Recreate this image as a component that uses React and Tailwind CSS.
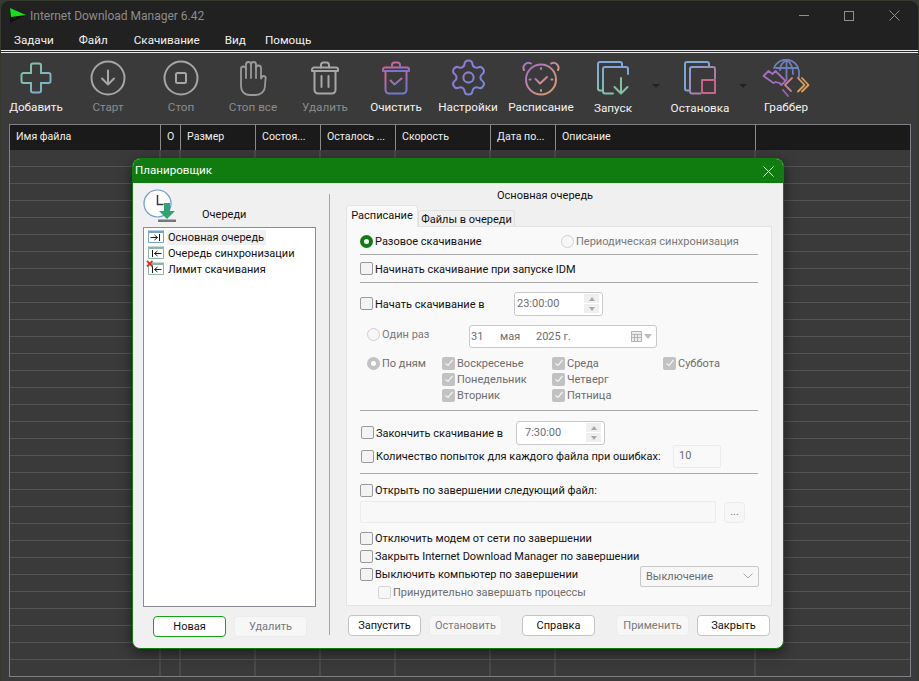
import React from "react";
import { Settings } from "lucide-react";

const tools = [
  { label: "Добавить", w: "w-[72px]", on: true, icon: <PlusIcon /> },
  { label: "Старт", w: "w-[72px]", icon: <StartIcon /> },
  { label: "Стоп", w: "w-[72px] ml-px", icon: <StopIcon /> },
  { label: "Стоп все", w: "w-[72px]", icon: <HandIcon /> },
  { label: "Удалить", w: "w-[72px]", icon: <TrashIcon /> },
  { label: "Очистить", w: "w-[72px] -ml-px", on: true, icon: <ClearIcon /> },
  { label: "Настройки", w: "w-[72px]", on: true, icon: <Settings size={41} strokeWidth={1.2} color="url(#gGear)" /> },
  { label: "Расписание", w: "w-[72px] ml-px", on: true, icon: <AlarmIcon /> },
  { label: "Запуск", w: "w-[72px]", on: true, low: true, icon: <RunIcon /> },
  { arrow: true, w: "w-[14px]" },
  { label: "Остановка", w: "w-[72px] ml-px", on: true, low: true, icon: <HaltIcon /> },
  { arrow: true, w: "w-[14px]" },
  { label: "Граббер", w: "w-[72px]", on: true, icon: <GrabberIcon /> },
];

const cols = [
  ["Имя файла", "w-[151px]"],
  ["О", "w-[20px]"],
  ["Размер", "w-[75px]"],
  ["Состоя...", "w-[65px]"],
  ["Осталось ...", "w-[75px]"],
  ["Скорость", "w-[95px]"],
  ["Дата по...", "w-[65px]"],
  ["Описание", "w-[200px]"],
];

function PlusIcon() {
  return (
    <svg width="32" height="32" viewBox="0 0 32 32" fill="none" stroke="url(#gPlus)" strokeWidth="2">
      <path d="M13 1.5h6a2 2 0 0 1 2 2V11h7.5a2 2 0 0 1 2 2v6a2 2 0 0 1-2 2H21v7.5a2 2 0 0 1-2 2h-6a2 2 0 0 1-2-2V21H3.5a2 2 0 0 1-2-2v-6a2 2 0 0 1 2-2H11V3.5a2 2 0 0 1 2-2z" />
    </svg>
  );
}
function StartIcon() {
  return (
    <svg width="36" height="36" viewBox="0 0 36 36" fill="none" stroke="#a6a6a6" strokeWidth="2" strokeLinecap="round" strokeLinejoin="round">
      <circle cx="18" cy="18" r="16.5" />
      <path d="M18 10.5v14M12 18.5l6 6 6-6" />
    </svg>
  );
}
function StopIcon() {
  return (
    <svg width="36" height="36" viewBox="0 0 36 36" fill="none" stroke="#a6a6a6" strokeWidth="2">
      <circle cx="18" cy="18" r="16.5" />
      <rect x="13" y="13" width="10" height="10" rx="1.5" />
    </svg>
  );
}
function HandIcon() {
  return (
    <svg width="30" height="36" viewBox="0 0 30 36" fill="none" stroke="#9a9a9a" strokeWidth="1.800" strokeLinecap="round" strokeLinejoin="round">
      <path d="M3 24V9a2.500 2.500 0 0 1 5 0V4.500a2.500 2.500 0 0 1 5 0 2.500 2.500 0 0 1 5 0V8a2.500 2.500 0 0 1 5 0v10.500l1.500-2a2 2 0 0 1 3 2.500c0 2-.5 4-.5 7 0 5-4 9-9 9h-6c-6 0-9-4-9-9z" />
      <path d="M8 9v9M13 4.500V18M18 4.500V18" />
    </svg>
  );
}
function TrashIcon() {
  return (
    <svg width="30" height="34" viewBox="0 0 30 34" fill="none" stroke="#a6a6a6" strokeWidth="2" strokeLinecap="round" strokeLinejoin="round">
      <path d="M2 10V8.500a2 2 0 0 1 2-2h22a2 2 0 0 1 2 2V10H2z" />
      <path d="M11 6.500V4a2.500 2.500 0 0 1 2.500-2.500h3A2.500 2.500 0 0 1 19 4v2.500" />
      <path d="M4.500 10.500V29a3.500 3.500 0 0 0 3.500 3.500h14a3.500 3.500 0 0 0 3.500-3.500V10.500" />
      <path d="M11.500 15v11M18.500 15v11" />
    </svg>
  );
}
function ClearIcon() {
  return (
    <svg width="30" height="34" viewBox="0 0 30 34" fill="none" stroke="url(#gClear)" strokeWidth="2" strokeLinecap="round" strokeLinejoin="round">
      <path d="M2 10V8.500a2 2 0 0 1 2-2h22a2 2 0 0 1 2 2V10H2z" />
      <path d="M11 6.500V4a2.500 2.500 0 0 1 2.500-2.500h3A2.500 2.500 0 0 1 19 4v2.500" />
      <path d="M4.500 10.500V29a3.500 3.500 0 0 0 3.500 3.500h14a3.500 3.500 0 0 0 3.500-3.500V10.500" />
      <path d="M9.500 19.500l4 4 7-6" />
    </svg>
  );
}
function AlarmIcon() {
  return (
    <svg width="38" height="36" viewBox="0 0 38 36" fill="none" stroke="url(#gAlarm)" strokeWidth="2" strokeLinecap="round" strokeLinejoin="round">
      <circle cx="19" cy="19.5" r="15" />
      <path d="M2 10a5 5 0 0 1 7-6.500M36 10a5 5 0 0 0-7-6.500" />
      <path d="M13.500 19l4.500 4.500 7-6.500" />
      <path d="M19 8v1M19 30v1M7.500 19.500h1M29.500 19.500h1" />
    </svg>
  );
}
function RunIcon() {
  return (
    <svg width="33" height="34" viewBox="0 0 33 34" fill="none" strokeWidth="2" strokeLinecap="round" strokeLinejoin="round">
      <path d="M5 29.500H3a2 2 0 0 1-2-2V3a2 2 0 0 1 2-2h20a2 2 0 0 1 2 2v2" stroke="url(#gRun)" />
      <path d="M16 32.500H8a2 2 0 0 1-2-2V8a2 2 0 0 1 2-2h21a2 2 0 0 1 2 2v5" stroke="url(#gRun)" />
      <path d="M24 17v15M17.500 26l6.500 6.500 6.500-6.500" stroke="#86c1a7" />
    </svg>
  );
}
function HaltIcon() {
  return (
    <svg width="33" height="34" viewBox="0 0 33 34" fill="none" strokeWidth="2" strokeLinejoin="round">
      <path d="M5 29.500H3a2 2 0 0 1-2-2V3a2 2 0 0 1 2-2h20a2 2 0 0 1 2 2v2" stroke="#7ea6d2" />
      <path d="M17 32.500H8a2 2 0 0 1-2-2V8a2 2 0 0 1 2-2h21a2 2 0 0 1 2 2v10" stroke="url(#gHalt)" />
      <rect x="18" y="19" width="13" height="13" stroke="#c9638a" />
    </svg>
  );
}
function GrabberIcon() {
  return (
    <svg width="48" height="38" viewBox="0 0 48 38" fill="none" strokeWidth="1.800" strokeLinecap="round" strokeLinejoin="round">
      <path d="M12 9A13 13 0 0 1 37 12v6" stroke="#6e7fb8" />
      <path d="M24.500 1c-5 3-6.500 7-6.500 10M24.500 1c5 3 6.500 8 6.500 14M24.500 1v20M14 9h22" stroke="#6e7fb8" />
      <path d="M1.500 17l5-5 4 3 3-3 10 10-4 4-2-2-4-1-2 1z" stroke="#a56cc0" />
      <path d="M30 19l-7 7 6 6" stroke="#c97f90" />
      <path d="M36 19l6.500 7-6.500 6.500" stroke="#dfa055" />
      <path d="M40 19l6.500 7-6.500 6.500" stroke="#dfa055" />
      <path d="M21 31l5 6" stroke="#9a63b8" />
    </svg>
  );
}

function Check({ checked, disabled, className = "" }) {
  if (checked) {
    return (
      <span className={"flex h-[13px] w-[13px] shrink-0 items-center justify-center rounded-[2px] bg-[#c2c2c2] " + className}>
        <svg width="10" height="10" viewBox="0 0 10 10" fill="none" stroke="#f4f4f4" strokeWidth="1.200"><path d="M1.500 5.500l2.500 2 4.500-5.500" /></svg>
      </span>
    );
  }
  return (
    <span className={(disabled ? "border-[#d6d6d6] bg-[#f7f7f7] " : "border-[#9a9a9a] bg-[#f3f3f3] ") + "block h-[13px] w-[13px] shrink-0 rounded-[2px] border " + className} />
  );
}

function CheckRow({ children, className = "", disabled, muted, nudge }) {
  return (
    <div className={"flex items-center " + className}>
      <Check disabled={disabled} />
      <span className={"ml-[2px] whitespace-nowrap " + (nudge ? "pt-[2px] " : "") + (muted ? "text-[#6e6e6e]" : "text-[#111]")}>{children}</span>
    </div>
  );
}

function Spinner({ value, className }) {
  return (
    <div className={"flex h-[24px] items-center justify-between rounded-[3px] border border-[#c9c9c9] bg-white text-[#6e6e6e] " + className}>
      <span>{value}</span>
      <span className="mr-[3px] flex flex-col gap-px">
        <span className="flex h-[9px] w-[15px] items-center justify-center bg-[#efefef]"><span className="border-x-[3.500px] border-b-[4px] border-x-transparent border-b-[#a8a8a8]" /></span>
        <span className="flex h-[9px] w-[15px] items-center justify-center bg-[#efefef]"><span className="border-x-[3.500px] border-t-[4px] border-x-transparent border-t-[#a8a8a8]" /></span>
      </span>
    </div>
  );
}

function Btn({ children, disabled, primary, className = "" }) {
  const tone = disabled
    ? "border-[#ececec] bg-[#f7f7f7] text-[#7a7a7a]"
    : primary
      ? "border-[#17a317] bg-white text-[#111]"
      : "border-[#c4c4c4] bg-white text-[#111]";
  return <div className={"flex h-[21px] w-[73px] items-center justify-center rounded-[4px] border " + tone + " " + className}>{children}</div>;
}

function Hr({ className = "" }) {
  return <div className={"ml-[13px] h-px w-[398px] bg-[#a9a9a9] " + className} />;
}

function QueueIcon({ tone, flip, cross }) {
  return (
    <svg width="18" height="14" viewBox="0 0 18 14" fill="none" className="shrink-0 overflow-visible">
      <path d="M1.500 2.500h15v10h-15z" stroke={tone} fill="#fff" />
      <path d="M1 1.500h16" stroke={tone} strokeWidth="2" />
      {flip ? (
        <path d="M5.500 4v7M14.500 7.500H7.500M10.500 5l-3 2.500 3 2.500" stroke="#1c1c1c" />
      ) : (
        <path d="M12.500 4v7M3.500 7.500h7M7.500 5l3 2.500-3 2.500" stroke="#1c1c1c" />
      )}
      {cross && <path d="M0-1l5.500 5.500M5.500-1L0 4.500" stroke="#d8342a" strokeWidth="1.800" />}
    </svg>
  );
}

export default function App() {
  const rows = Array.from({ length: 31 });
  return (
    <div className="relative h-[681px] w-[919px] overflow-hidden bg-[#343a2e] font-['Roboto',sans-serif] text-[11.700px] leading-none">
      <svg width="0" height="0" className="absolute">
        <defs>
          <linearGradient id="gPlus" x1="0" y1="0" x2="1" y2="1"><stop offset="0" stopColor="#7fc9a0" /><stop offset="1" stopColor="#7fa9cf" /></linearGradient>
          <linearGradient id="gClear" x1="0" y1="0" x2="0.4" y2="1"><stop offset="0" stopColor="#e0608c" /><stop offset="1" stopColor="#6f78d0" /></linearGradient>
          <linearGradient id="gGear" x1="0" y1="0" x2="1" y2="1"><stop offset="0" stopColor="#9a74d2" /><stop offset="1" stopColor="#6f8ad8" /></linearGradient>
          <linearGradient id="gAlarm" x1="0" y1="0" x2="1" y2="1"><stop offset="0" stopColor="#a46fd0" /><stop offset="1" stopColor="#dfa068" /></linearGradient>
          <linearGradient id="gRun" x1="0" y1="0" x2="0" y2="1"><stop offset="0" stopColor="#7ea6d8" /><stop offset="1" stopColor="#84bfae" /></linearGradient>
          <linearGradient id="gHalt" x1="0" y1="0" x2="1" y2="1"><stop offset="0" stopColor="#7fa6d6" /><stop offset="1" stopColor="#c9638a" /></linearGradient>
        </defs>
      </svg>

      {/* main window */}
      <div className="ml-px mt-px flex h-[680px] w-[917px] flex-col overflow-hidden rounded-t-[8px] bg-[#3a3a3a]">
        <div className="flex h-[29px] shrink-0 items-center bg-[#212121]">
          <svg width="18" height="16" viewBox="0 0 18 16" className="ml-[8px]">
            <path d="M1 0l16 7-16 8z" fill="#111" />
            <path d="M1 0l16 7-15 2z" fill="#18e018" />
          </svg>
          <span className="ml-[3px] text-[12px] text-[#8c8c8c]">Internet Download Manager 6.42</span>
          <div className="ml-auto mr-[18px] flex items-center gap-[35px]">
            <span className="block h-px w-[10px] bg-[#8f8f8f]" />
            <span className="block h-[10px] w-[10px] border border-[#8f8f8f]" />
            <svg width="11" height="11" viewBox="0 0 11 11" stroke="#8f8f8f"><path d="M.5.500l10 10M10.500.500l-10 10" /></svg>
          </div>
        </div>
        <div className="flex h-[20px] shrink-0 items-center bg-[#212121] pt-px text-[#f2f2f2]">
          <span className="ml-[13px]">Задачи</span>
          <span className="ml-[25px]">Файл</span>
          <span className="ml-[26px]">Скачивание</span>
          <span className="ml-[25px]">Вид</span>
          <span className="ml-[19px]">Помощь</span>
        </div>
        <div className="h-[3px] shrink-0 border-y border-[#f2f2f2] bg-[#212121]" />
        <div className="flex h-[71px] shrink-0 -ml-px bg-[#3a3a3a]">
          {tools.map((t, i) =>
            t.arrow ? (
              <div key={i} className={"flex items-start justify-center pt-[31px] " + t.w}>
                <span className="border-x-[4px] border-t-[4px] border-x-transparent border-t-[#222]" />
              </div>
            ) : (
              <div key={i} className={"flex flex-col items-center " + t.w}>
                <div className="mt-[6px] flex h-[37px] items-center justify-center">{t.icon}</div>
                <span className={"whitespace-nowrap " + (t.low ? "mt-[7px] " : "mt-[6px] ") + (t.on ? "text-[#f2f2f2]" : "text-[#8c8c8c]")}>{t.label}</span>
              </div>
            )
          )}
        </div>

        {/* file table */}
        <div className="ml-[8px] h-[553px] w-[902px] shrink-0 overflow-hidden border border-[#808086]">
          <div className="flex h-[25px] bg-[#1a1a1a] text-[10.600px] text-[#eeeeee]">
            {cols.map(([name, w]) => (
              <div key={name} className={"flex items-center border-r border-[#8a8a8a] pl-[6px] " + w}>
                <span className="whitespace-nowrap">{name}</span>
              </div>
            ))}
          </div>
          {rows.map((_, r) => (
            <div key={r} className="flex h-[17px] border-b border-[#545454]">
              {cols.map(([name, w]) => (
                <div key={name} className={"border-r-2 border-[#4a4a4a] " + w} />
              ))}
            </div>
          ))}
        </div>
      </div>

      {/* scheduler dialog */}
      <div className="absolute left-[132px] top-[158px] flex h-[491px] w-[652px] flex-col overflow-hidden rounded-[8px] border border-[#107c10] bg-[#f0f0f0] text-[11px] text-[#111] shadow-[0_4px_14px_rgba(0,0,0,0.5)]">
        <div className="flex h-[24px] shrink-0 items-center justify-between bg-[#107c10] pl-[2px] pr-[9px]">
          <span className="text-[11.600px] text-white">Планировщик</span>
          <svg width="11" height="11" viewBox="0 0 11 11" stroke="#fff"><path d="M.5.500l10 10M10.500.500l-10 10" /></svg>
        </div>

        <div className="flex min-h-0 flex-1">
          {/* queues column */}
          <div className="flex w-[196px] shrink-0 flex-col pl-[10px]">
            <div className="flex h-[44px] shrink-0">
              <svg width="34" height="34" viewBox="0 0 34 34" fill="none" className="mt-[6px]">
                <circle cx="14.500" cy="14.500" r="13.500" stroke="#6c9ccd" strokeWidth="1.200" fill="#fff" />
                <path d="M14.500 6v9.500h6" stroke="#3a3a3a" strokeWidth="1.500" />
                <path d="M21 14h6v8h5l-8 8-8-8h5z" fill="#2fa472" />
                <path d="M15 30.500h18v2.500H15z" fill="#777" />
              </svg>
              <span className="ml-[25px] mt-[26px] whitespace-nowrap">Очереди</span>
            </div>
            <div className="h-[380px] w-[173px] shrink-0 border border-[#8c8c94] bg-white pl-[3px] pt-px">
              <div className="flex h-[16px] items-center"><QueueIcon tone="#7aa0d0" /><span className="ml-[2px] flex h-[15px] items-center bg-[#f0f0f0] pl-[1px] pr-[2px]">Основная очередь</span></div>
              <div className="flex h-[16px] items-center"><QueueIcon tone="#8cb5a5" flip /><span className="ml-[3px]">Очередь синхронизации</span></div>
              <div className="flex h-[16px] items-center"><QueueIcon tone="#8cb5a5" flip cross /><span className="ml-[3px]">Лимит скачивания</span></div>
            </div>
            <div className="mt-[9px] flex gap-[8px] pl-[10px]">
              <Btn primary>Новая</Btn>
              <Btn disabled>Удалить</Btn>
            </div>
          </div>

          <div className="mt-[11px] h-[441px] w-px shrink-0 bg-[#a6a6a6]" />

          {/* schedule column */}
          <div className="flex w-[453px] shrink-0 flex-col pl-[16px]">
            <div className="ml-[151px] mt-[4px] flex h-[16px] items-center whitespace-nowrap">Основная очередь</div>
            <div className="mt-[3px] flex h-[21px] items-end">
              <div className="z-10 flex h-[22px] w-[72px] items-center justify-center rounded-t-[3px] border-x border-t border-[#e4e4e4] bg-[#f9f9f9] pb-[2px]">Расписание</div>
              <div className="flex h-[17px] w-[97px] items-center justify-center whitespace-nowrap rounded-t-[3px] border-x border-t border-[#e0e0e0] bg-[#f0f0f0]">Файлы в очереди</div>
            </div>

            <div className="-mt-px h-[380px] w-[426px] shrink-0 border border-[#e4e4e4] bg-[#f9f9f9]">
              <div className="flex h-[27px] items-center pl-[13px] pt-px">
                <span className="flex h-[13px] w-[13px] items-center justify-center rounded-full bg-[#107c10]"><span className="h-[5px] w-[5px] rounded-full bg-white" /></span>
                <span className="ml-[2px] w-[186px] pt-px">Разовое скачивание</span>
                <span className="h-[13px] w-[13px] rounded-full border border-[#cfcfcf] bg-[#f7f7f7]" />
                <span className="ml-[2px] pt-px text-[#7a7a7a]">Периодическая синхронизация</span>
              </div>
              <Hr />
              <CheckRow nudge className="h-[27px] pl-[13px]">Начинать скачивание при запуске IDM</CheckRow>
              <Hr />
              <div className="flex h-[41px] items-center pl-[13px]">
                <CheckRow nudge className="w-[154px]">Начать скачивание в</CheckRow>
                <Spinner value="23:00:00" className="w-[89px] pl-[2px]" />
              </div>
              <div className="flex h-[24px] items-center pl-[20px]">
                <span className="mb-[3px] h-[13px] w-[13px] rounded-full border border-[#cfcfcf] bg-[#f7f7f7]" />
                <span className="mb-[3px] ml-[2px] w-[87px] text-[#7a7a7a]">Один раз</span>
                <div className="flex h-[23px] w-[188px] items-center whitespace-nowrap rounded-[3px] border border-[#c9c9c9] bg-white pl-[1px] text-[#6e6e6e]">
                  <span className="w-[29px]">31</span>
                  <span className="w-[36px]">мая</span>
                  <span className="w-[95px]">2025 г.</span>
                  <svg width="11" height="11" viewBox="0 0 11 11" fill="#ececec" stroke="#b4b4b4" className="shrink-0">
                    <path d="M.5.500h10v10h-10zM.5 3.500h10M.5 6.500h10M3.500 3.500v7M6.500 3.500v7" />
                  </svg>
                  <span className="ml-[2px] border-x-[4px] border-t-[5px] border-x-transparent border-t-[#bcbcbc]" />
                </div>
              </div>
              <div className="mt-[7px] flex h-[48px] pl-[20px] text-[#6e6e6e]">
                <div className="flex h-[16px] w-[75px] items-center">
                  <span className="flex h-[13px] w-[13px] items-center justify-center rounded-full bg-[#c2c2c2]"><span className="h-[5px] w-[5px] rounded-full bg-white" /></span>
                  <span className="ml-[2px]">По дням</span>
                </div>
                <div className="flex w-[110px] flex-col">
                  {["Воскресенье", "Понедельник", "Вторник"].map((d) => (
                    <div key={d} className="flex h-[16px] items-center"><Check checked /><span className="ml-[2px]">{d}</span></div>
                  ))}
                </div>
                <div className="flex w-[111px] flex-col">
                  {["Среда", "Четверг", "Пятница"].map((d) => (
                    <div key={d} className="flex h-[16px] items-center"><Check checked /><span className="ml-[2px]">{d}</span></div>
                  ))}
                </div>
                <div className="flex h-[16px] items-center"><Check checked /><span className="ml-[2px]">Суббота</span></div>
              </div>
              <Hr className="mt-[7px]" />
              <div className="mt-[10px] flex h-[23px] items-center pl-[14px]">
                <CheckRow nudge className="w-[155px]">Закончить скачивание в</CheckRow>
                <Spinner value="7:30:00" className="w-[89px] pl-[8px]" />
              </div>
              <div className="mt-px flex h-[22px] items-center pl-[14px]">
                <CheckRow className="w-[312px]">Количество попыток для каждого файла при ошибках:</CheckRow>
                <div className="flex h-[23px] w-[48px] items-start rounded-[2px] border border-[#ececec] bg-[#f9f9f9] pl-[5px] pt-[4px] text-[#6e6e6e]">10</div>
              </div>
              <Hr className="mt-[6px]" />
              <CheckRow className="mt-[5px] h-[22px] pl-[13px]">Открыть по завершении следующий файл:</CheckRow>
              <div className="flex h-[22px] items-center pl-[13px]">
                <div className="h-[22px] w-[356px] rounded-[2px] border border-[#ececec] bg-[#f8f8f8]" />
                <div className="ml-[8px] flex h-[21px] w-[21px] items-end justify-center rounded-[4px] border border-[#ececec] bg-[#f7f7f7] pb-[5px] text-[#7a7a7a]">...</div>
              </div>
              <CheckRow className="mt-[6px] h-[18px] pl-[13px]">Отключить модем от сети по завершении</CheckRow>
              <CheckRow className="h-[18px] pl-[13px]">Закрыть Internet Download Manager по завершении</CheckRow>
              <div className="flex h-[18px] items-center pl-[13px]">
                <CheckRow className="w-[280px]">Выключить компьютер по завершении</CheckRow>
                <div className="mt-[4px] flex h-[21px] w-[119px] shrink-0 items-center justify-between rounded-[2px] border border-[#c9c9c9] bg-[#f7f7f7] pl-[5px] pr-[5px] text-[#6e6e6e]">
                  <span>Выключение</span>
                  <svg width="10" height="6" viewBox="0 0 10 6" fill="none" stroke="#a8a8a8"><path d="M.5.500L5 5 9.500.500" /></svg>
                </div>
              </div>
              <CheckRow className="h-[18px] pl-[31px]" disabled muted>Принудительно завершать процессы</CheckRow>
            </div>

            <div className="mt-[9px] flex pl-[2px]">
              <Btn>Запустить</Btn>
              <Btn disabled className="ml-[8px]">Остановить</Btn>
              <Btn className="ml-[20px]">Справка</Btn>
              <Btn disabled className="ml-[21px]">Применить</Btn>
              <Btn className="ml-[8px]">Закрыть</Btn>
            </div>
          </div>
        </div>
      </div>
    </div>
  );
}
